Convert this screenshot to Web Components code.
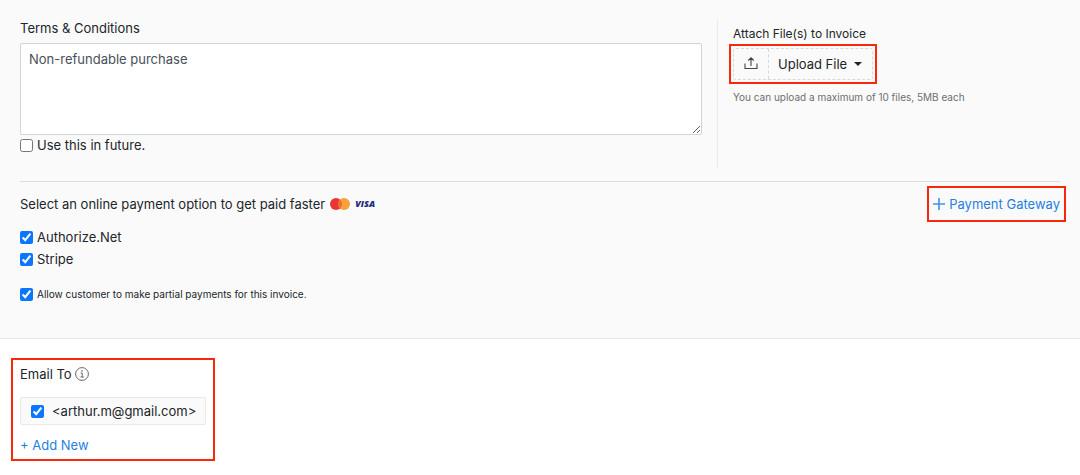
<!DOCTYPE html>
<html lang="en">
<head>
<meta charset="utf-8">
<meta name="viewport" content="width=device-width, initial-scale=1">
<title>Invoice options</title>
<style>
  body { margin: 0; background: #fff; color: #212529; font: 13px/20px Inter, "Liberation Sans", sans-serif; }
</style>
</head>
<body>
<invoice-page></invoice-page>

<script>
const define = (name, html, setup) => {
  const template = document.createElement('template');
  template.innerHTML = '<style>*{box-sizing:border-box}:host{display:block;box-sizing:border-box}</style>' + html;
  customElements.define(name, class extends HTMLElement {
    constructor() {
      super();
      this.attachShadow({ mode: 'open' }).append(template.content.cloneNode(true));
    }
    connectedCallback() { if (setup) setup(this, this.shadowRoot); }
  });
};

define('check-option', `
  <style>
    label { display: flex; align-items: center; gap: var(--check-gap, 4px); }
    input { margin: 0; width: 13px; height: 13px; flex: none; accent-color: #0b76ff; }
  </style>
  <label><input type="checkbox"><span><slot></slot></span></label>
`, (host, root) => { root.querySelector('input').checked = host.hasAttribute('checked'); });

define('focus-frame', `
  <style>:host { width: fit-content; border: 2px solid #f9280b; padding: var(--frame-pad, 2px); }</style>
  <slot></slot>
`);

define('terms-field', `
  <style>
    label { display: block; margin-bottom: 5px; }
    textarea { display: block; width: 100%; height: 92px; padding: 5px 8px; border: 1px solid #ced4da;
      border-radius: 2px; background: #fff; color: #495057; font: inherit; outline: 0; resize: both; }
  </style>
  <label for="terms">Terms &amp; Conditions</label>
  <textarea id="terms">Non-refundable purchase</textarea>
  <check-option>Use this in future.</check-option>
`);

define('upload-button', `
  <style>
    button { display: flex; padding: 0; height: 32px; border: 1px dashed #d8d8d8; border-radius: 3px;
      background: transparent; color: inherit; font: inherit; }
    .icon, .text { display: flex; align-items: center; height: 100%; }
    .icon { width: 35px; justify-content: center; border-right: 1px dashed #d8d8d8; }
    .text { padding: 0 10px 0 9px; gap: 7px; }
    .caret { border: 4px solid transparent; border-top-color: currentColor; border-bottom: 0; }
  </style>
  <button type="button">
    <span class="icon"><svg width="14" height="14" viewBox="0 0 14 14" fill="none" stroke="#444" stroke-width="1.1" aria-hidden="true"><path d="M1 6.5V11.5H13V6.5M7 9V1M4.2 3.5L7 .8L9.8 3.5"/></svg></span>
    <span class="text">Upload File<span class="caret"></span></span>
  </button>
`);

define('file-attachments', `
  <style>
    .title { padding-left: 4px; font-size: 12px; }
    .hint { padding-left: 4px; font-size: 10px; color: #6f6f6f; margin-top: 3px; }
  </style>
  <div class="title">Attach File(s) to Invoice</div>
  <focus-frame><upload-button></upload-button></focus-frame>
  <div class="hint">You can upload a maximum of 10 files, 5MB each</div>
`);

define('card-brands', `
  <style>
    :host { display: flex; align-items: center; gap: 5px; }
    .visa { color: #1a2a7c; font: italic 800 9px/12px "Open Sans", sans-serif; }
    svg { display: block; }
  </style>
  <svg width="20" height="12" viewBox="0 0 20 12" role="img" aria-label="Mastercard"><circle cx="6" cy="6" r="6" fill="#eb3438"/><circle cx="14" cy="6" r="6" fill="#f7a03c"/><path d="M10 1.5a6 6 0 0 1 0 9a6 6 0 0 1 0-9" fill="#f26a2c"/></svg>
  <span class="visa">VISA</span>
`);

define('gateway-link', `
  <style>
    a { display: flex; align-items: center; gap: 4px; height: 28px; color: #1f7fe0; text-decoration: none; }
  </style>
  <a href="#gateway"><svg width="12" height="12" viewBox="0 0 12 12" fill="none" stroke="#3f93ea" stroke-width="1.6" aria-hidden="true"><path d="M6 0V12M0 6H12"/></svg>Payment Gateway</a>
`);

define('payment-options', `
  <style>
    header { display: flex; align-items: center; justify-content: space-between; padding-top: 4px; }
    .intro { display: flex; align-items: center; gap: 5px; }
    .gateway { --frame-pad: 2px 4px; margin-right: -6px; }
    .list { display: grid; gap: 2px; padding-top: 5px; }
    .partial { margin-top: 15px; font-size: 10px; }
  </style>
  <header>
    <div class="intro"><span>Select an online payment option to get paid faster</span><card-brands></card-brands></div>
    <focus-frame class="gateway"><gateway-link></gateway-link></focus-frame>
  </header>
  <div class="list">
    <check-option checked>Authorize.Net</check-option>
    <check-option checked>Stripe</check-option>
  </div>
  <check-option class="partial" checked>Allow customer to make partial payments for this invoice.</check-option>
`);

define('email-recipients', `
  <style>
    .title { display: flex; align-items: center; gap: 3px; }
    .recipient { --check-gap: 8px; width: fit-content; margin: 13px 0 10px; padding: 3px 9px 3px 10px; border: 1px solid #e9e9e9; border-radius: 2px; background: #fafafa; }
    a { color: #1f7fe0; text-decoration: none; }
  </style>
  <div class="title">Email To <svg width="14" height="14" viewBox="0 0 14 14" fill="none" stroke="#555" aria-hidden="true"><circle cx="7" cy="7" r="6.4" stroke-width=".9"/><path d="M5.7 6.1H7.2V10M5.5 10H8.8" stroke-width=".9"/><circle cx="7" cy="4" r=".8" fill="#555" stroke="none"/></svg></div>
  <check-option class="recipient" checked>&lt;arthur.m@gmail.com&gt;</check-option>
  <a href="#add">+ Add New</a>
`);

define('invoice-page', `
  <style>
    .settings { padding: 18px 20px 34px; border-bottom: 1px solid #e9e9e9; background: #fafafa; }
    .top { display: grid; grid-template-columns: minmax(0, 682fr) minmax(0, 343fr); gap: 15px; padding-bottom: 13px; border-bottom: 1px solid #dedede; }
    .attach { border-left: 1px solid #ebebeb; padding: 6px 0 0 11px; min-height: 150px; }
    .mail { --frame-pad: 4px 7px; padding: 19px 11px 14px; }
  </style>
  <section class="settings">
    <div class="top"><terms-field></terms-field><file-attachments class="attach"></file-attachments></div>
    <payment-options></payment-options>
  </section>
  <section class="mail"><focus-frame><email-recipients></email-recipients></focus-frame></section>
`);
</script>
</body>
</html>
